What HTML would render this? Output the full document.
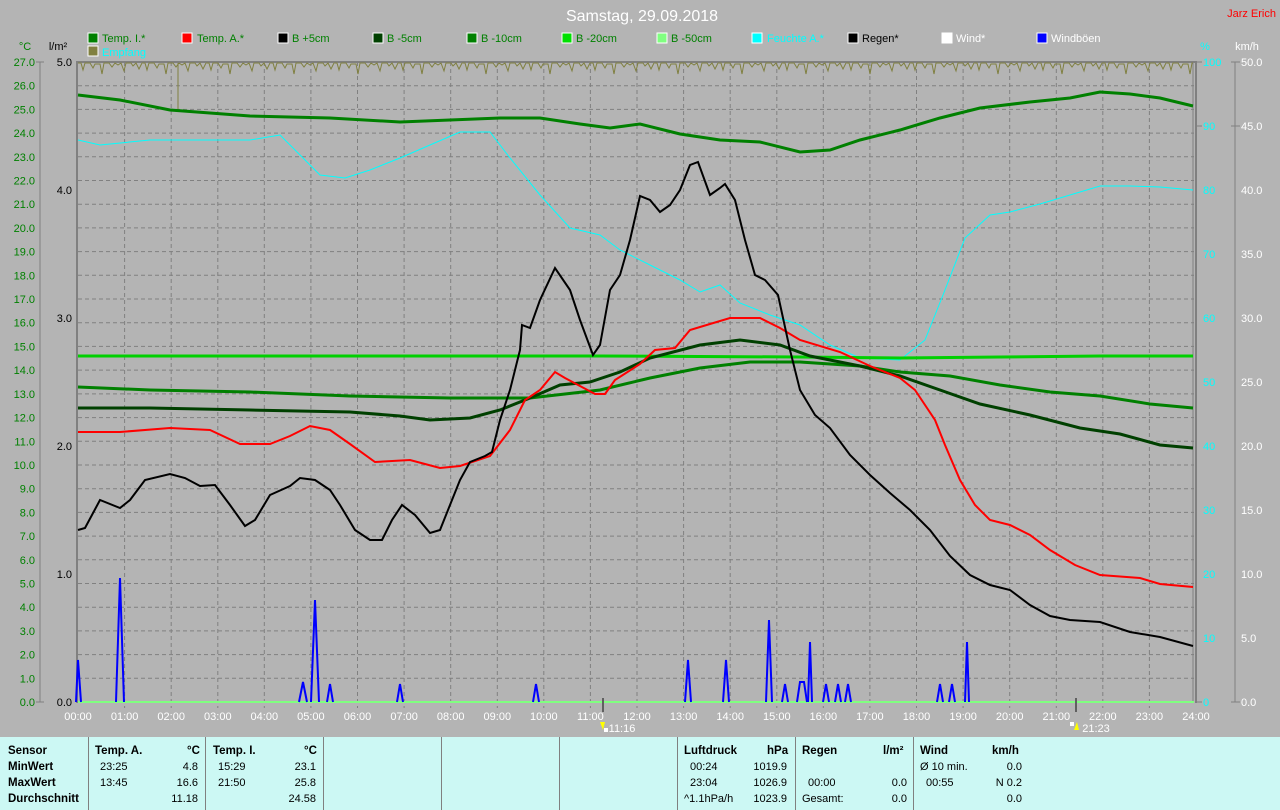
<!DOCTYPE html>
<html><head><meta charset="utf-8">
<style>
html,body{margin:0;padding:0;background:#b4b4b4;}
body{width:1280px;height:810px;overflow:hidden;position:relative;font-family:"Liberation Sans",sans-serif;}
svg{position:absolute;left:0;top:0;}
.tbl{position:absolute;left:0;top:737px;width:1280px;height:73px;background:#ccf8f4;}
.tbl .v{position:absolute;top:0;width:1px;height:73px;background:#808080;}
.tbl span{position:absolute;font-size:11px;color:#000;white-space:nowrap;}
.tbl b{position:absolute;font-size:11.5px;color:#000;white-space:nowrap;}
</style></head><body>
<svg width="1280" height="737" viewBox="0 0 1280 737" font-family="Liberation Sans, sans-serif">
<defs>
<pattern id="emp" x="78" y="62" width="64" height="18" patternUnits="userSpaceOnUse">
<polyline fill="none" stroke="#808040" stroke-width="1" points="0,1 3,1 5,8 7,1 12,1 15,6 17,2 22,2 24,12 26,1 31,1 34,5 37,1 40,3 43,1 46,9 48,1 53,1 55,4 58,1 61,7 64,1"/>
</pattern>
</defs>
<text x="642" y="21" fill="#fff" font-size="16" text-anchor="middle">Samstag, 29.09.2018</text>
<text x="1276" y="17" fill="#f00" font-size="11" text-anchor="end">Jarz Erich</text>
<!-- legend -->
<g font-size="11">
<rect x="88" y="33" width="10" height="10" fill="#008000" stroke="#fff"/><text x="102" y="42" fill="#008000">Temp. I.*</text>
<rect x="182" y="33" width="10" height="10" fill="#f00" stroke="#fff"/><text x="197" y="42" fill="#008000">Temp. A.*</text>
<rect x="278" y="33" width="10" height="10" fill="#000" stroke="#fff"/><text x="292" y="42" fill="#008000">B +5cm</text>
<rect x="373" y="33" width="10" height="10" fill="#004000" stroke="#fff"/><text x="387" y="42" fill="#008000">B -5cm</text>
<rect x="467" y="33" width="10" height="10" fill="#008000" stroke="#fff"/><text x="481" y="42" fill="#008000">B -10cm</text>
<rect x="562" y="33" width="10" height="10" fill="#00e000" stroke="#fff"/><text x="576" y="42" fill="#008000">B -20cm</text>
<rect x="657" y="33" width="10" height="10" fill="#80ff80" stroke="#fff"/><text x="671" y="42" fill="#008000">B -50cm</text>
<rect x="752" y="33" width="10" height="10" fill="#0ff" stroke="#fff"/><text x="767" y="42" fill="#0ff">Feuchte A.*</text>
<rect x="848" y="33" width="10" height="10" fill="#000" stroke="#fff"/><text x="862" y="42" fill="#000">Regen*</text>
<rect x="942" y="33" width="10" height="10" fill="#fff" stroke="#fff"/><text x="956" y="42" fill="#fff">Wind*</text>
<rect x="1037" y="33" width="10" height="10" fill="#00f" stroke="#fff"/><text x="1051" y="42" fill="#fff">Windböen</text>
<rect x="88" y="46" width="10" height="10" fill="#808040" stroke="#fff"/><text x="102" y="56" fill="#0ff">Empfang</text>
</g>
<text x="25" y="50" fill="#008000" font-size="11" text-anchor="middle">°C</text>
<text x="58" y="50" fill="#000" font-size="11" text-anchor="middle">l/m²</text>
<text x="1205" y="50" fill="#0ff" font-size="11" text-anchor="middle">%</text>
<text x="1247" y="50" fill="#fff" font-size="11" text-anchor="middle">km/h</text>
<!-- grid -->
<g stroke="#808080" stroke-width="1" stroke-dasharray="4,3">
<line x1="78" x2="1194" y1="85.7" y2="85.7"/><line x1="78" x2="1194" y1="109.4" y2="109.4"/><line x1="78" x2="1194" y1="133.1" y2="133.1"/><line x1="78" x2="1194" y1="156.8" y2="156.8"/><line x1="78" x2="1194" y1="180.5" y2="180.5"/><line x1="78" x2="1194" y1="204.2" y2="204.2"/><line x1="78" x2="1194" y1="227.9" y2="227.9"/><line x1="78" x2="1194" y1="251.6" y2="251.6"/><line x1="78" x2="1194" y1="275.3" y2="275.3"/><line x1="78" x2="1194" y1="299" y2="299"/><line x1="78" x2="1194" y1="322.7" y2="322.7"/><line x1="78" x2="1194" y1="346.4" y2="346.4"/><line x1="78" x2="1194" y1="370.1" y2="370.1"/><line x1="78" x2="1194" y1="393.9" y2="393.9"/><line x1="78" x2="1194" y1="417.6" y2="417.6"/><line x1="78" x2="1194" y1="441.3" y2="441.3"/><line x1="78" x2="1194" y1="465" y2="465"/><line x1="78" x2="1194" y1="488.7" y2="488.7"/><line x1="78" x2="1194" y1="512.4" y2="512.4"/><line x1="78" x2="1194" y1="536.1" y2="536.1"/><line x1="78" x2="1194" y1="559.8" y2="559.8"/><line x1="78" x2="1194" y1="583.5" y2="583.5"/><line x1="78" x2="1194" y1="607.2" y2="607.2"/><line x1="78" x2="1194" y1="630.9" y2="630.9"/><line x1="78" x2="1194" y1="654.6" y2="654.6"/><line x1="78" x2="1194" y1="678.3" y2="678.3"/>
<line y1="62" y2="708" x1="124.6" x2="124.6"/><line y1="62" y2="708" x1="171.2" x2="171.2"/><line y1="62" y2="708" x1="217.8" x2="217.8"/><line y1="62" y2="708" x1="264.3" x2="264.3"/><line y1="62" y2="708" x1="310.9" x2="310.9"/><line y1="62" y2="708" x1="357.5" x2="357.5"/><line y1="62" y2="708" x1="404.1" x2="404.1"/><line y1="62" y2="708" x1="450.7" x2="450.7"/><line y1="62" y2="708" x1="497.3" x2="497.3"/><line y1="62" y2="708" x1="543.8" x2="543.8"/><line y1="62" y2="708" x1="590.4" x2="590.4"/><line y1="62" y2="708" x1="637" x2="637"/><line y1="62" y2="708" x1="683.6" x2="683.6"/><line y1="62" y2="708" x1="730.2" x2="730.2"/><line y1="62" y2="708" x1="776.8" x2="776.8"/><line y1="62" y2="708" x1="823.3" x2="823.3"/><line y1="62" y2="708" x1="869.9" x2="869.9"/><line y1="62" y2="708" x1="916.5" x2="916.5"/><line y1="62" y2="708" x1="963.1" x2="963.1"/><line y1="62" y2="708" x1="1009.7" x2="1009.7"/><line y1="62" y2="708" x1="1056.3" x2="1056.3"/><line y1="62" y2="708" x1="1102.8" x2="1102.8"/><line y1="62" y2="708" x1="1149.4" x2="1149.4"/>
</g>
<!-- borders -->
<line x1="77" y1="62" x2="1197" y2="62" stroke="#808080" stroke-width="2"/>
<line x1="77" y1="61" x2="77" y2="703" stroke="#808080" stroke-width="2"/>
<line x1="1196" y1="61" x2="1196" y2="703" stroke="#808080" stroke-width="2"/>
<line x1="1193" y1="62" x2="1193" y2="702" stroke="#808080" stroke-width="1"/>
<line x1="78" y1="702" x2="1194" y2="702" stroke="#80ff80" stroke-width="2"/>
<line x1="603" y1="698" x2="603" y2="712" stroke="#606060" stroke-width="2"/>
<line x1="1076" y1="698" x2="1076" y2="712" stroke="#606060" stroke-width="2"/>
<!-- left axis -->
<line x1="40" y1="62" x2="40" y2="702" stroke="#808080"/>
<g stroke="#808080"><line x1="36" x2="44" y1="62" y2="62"/><line x1="36" x2="44" y1="702" y2="702"/></g>
<g fill="#008000" font-size="11" text-anchor="end">
<text x="35" y="66">27.0</text><text x="35" y="89.7">26.0</text><text x="35" y="113.4">25.0</text><text x="35" y="137.1">24.0</text><text x="35" y="160.8">23.0</text><text x="35" y="184.5">22.0</text><text x="35" y="208.2">21.0</text><text x="35" y="231.9">20.0</text><text x="35" y="255.6">19.0</text><text x="35" y="279.3">18.0</text><text x="35" y="303">17.0</text><text x="35" y="326.7">16.0</text><text x="35" y="350.4">15.0</text><text x="35" y="374.1">14.0</text><text x="35" y="397.9">13.0</text><text x="35" y="421.6">12.0</text><text x="35" y="445.3">11.0</text><text x="35" y="469">10.0</text><text x="35" y="492.7">9.0</text><text x="35" y="516.4">8.0</text><text x="35" y="540.1">7.0</text><text x="35" y="563.8">6.0</text><text x="35" y="587.5">5.0</text><text x="35" y="611.2">4.0</text><text x="35" y="634.9">3.0</text><text x="35" y="658.6">2.0</text><text x="35" y="682.3">1.0</text><text x="35" y="706">0.0</text>
</g>
<g fill="#000" font-size="11" text-anchor="end">
<text x="72" y="66">5.0</text><text x="72" y="194">4.0</text><text x="72" y="322">3.0</text><text x="72" y="450">2.0</text><text x="72" y="578">1.0</text><text x="72" y="706">0.0</text>
</g>
<!-- right axis -->
<line x1="1235" y1="62" x2="1235" y2="702" stroke="#808080"/>
<g fill="#0ff" font-size="11"><text x="1203" y="66">100</text><text x="1203" y="130">90</text><text x="1203" y="194">80</text><text x="1203" y="258">70</text><text x="1203" y="322">60</text><text x="1203" y="386">50</text><text x="1203" y="450">40</text><text x="1203" y="514">30</text><text x="1203" y="578">20</text><text x="1203" y="642">10</text><text x="1203" y="706">0</text></g>
<g fill="#fff" font-size="11"><text x="1241" y="66">50.0</text><text x="1241" y="130">45.0</text><text x="1241" y="194">40.0</text><text x="1241" y="258">35.0</text><text x="1241" y="322">30.0</text><text x="1241" y="386">25.0</text><text x="1241" y="450">20.0</text><text x="1241" y="514">15.0</text><text x="1241" y="578">10.0</text><text x="1241" y="642">5.0</text><text x="1241" y="706">0.0</text></g>
<g stroke="#808080"><line x1="1196" x2="1202" y1="62" y2="62"/><line x1="1196" x2="1202" y1="126" y2="126"/><line x1="1196" x2="1202" y1="702" y2="702"/><line x1="1231" x2="1240" y1="62" y2="62"/><line x1="1231" x2="1240" y1="126" y2="126"/><line x1="1231" x2="1240" y1="702" y2="702"/></g>
<!-- hour labels -->
<g fill="#fff" font-size="11" text-anchor="middle">
<text x="78" y="720">00:00</text><text x="124.6" y="720">01:00</text><text x="171.2" y="720">02:00</text><text x="217.8" y="720">03:00</text><text x="264.3" y="720">04:00</text><text x="310.9" y="720">05:00</text><text x="357.5" y="720">06:00</text><text x="404.1" y="720">07:00</text><text x="450.7" y="720">08:00</text><text x="497.3" y="720">09:00</text><text x="543.8" y="720">10:00</text><text x="590.4" y="720">11:00</text><text x="637" y="720">12:00</text><text x="683.6" y="720">13:00</text><text x="730.2" y="720">14:00</text><text x="776.8" y="720">15:00</text><text x="823.3" y="720">16:00</text><text x="869.9" y="720">17:00</text><text x="916.5" y="720">18:00</text><text x="963.1" y="720">19:00</text><text x="1009.7" y="720">20:00</text><text x="1056.3" y="720">21:00</text><text x="1102.8" y="720">22:00</text><text x="1149.4" y="720">23:00</text><text x="1196" y="720">24:00</text>
<text x="622" y="732">11:16</text><text x="1096" y="732">21:23</text>
</g>
<polygon points="600,722 605,722 603,730" fill="#ff0"/><rect x="604" y="728" width="4" height="4" fill="#fff"/>
<polygon points="1074,730 1079,730 1077,722" fill="#ff0"/><rect x="1070" y="722" width="4" height="4" fill="#fff"/>
<!-- empfang -->
<rect x="78" y="62" width="1115" height="18" fill="url(#emp)"/>
<line x1="178" y1="63" x2="178" y2="110" stroke="#808040"/>
<!-- curves -->
<polyline fill="none" stroke="#0ff" stroke-width="1" points="78,140 100,145 150,140 200,140 250,140 280,135 300,155 320,175 345,178 370,170 400,158 430,145 460,132 490,132 510,158 540,195 570,228 600,235 620,250 650,265 680,280 700,292 720,285 740,303 770,315 800,325 830,345 860,358 900,360 925,340 945,290 965,238 990,215 1010,212 1040,204 1070,195 1100,186 1130,186 1160,187 1193,190"/>
<polyline fill="none" stroke="#008000" stroke-width="3" points="78,95 120,100 170,110 250,116 330,118 400,122 450,120 500,118 540,118 580,124 610,128 640,124 680,134 720,140 760,142 800,152 830,150 860,140 900,130 940,118 980,108 1030,102 1070,98 1100,92 1130,94 1160,98 1193,106"/>
<polyline fill="none" stroke="#00d000" stroke-width="3" points="78,356 600,356 800,357 900,358 1000,357 1100,356 1193,356"/>
<polyline fill="none" stroke="#008000" stroke-width="3" points="78,387 150,390 250,392 350,396 450,398 530,398 600,390 650,378 700,368 750,362 800,362 860,366 900,372 950,376 1000,385 1050,392 1100,396 1150,404 1193,408"/>
<polyline fill="none" stroke="#004000" stroke-width="3" points="78,408 150,408 250,410 350,412 400,416 430,420 470,418 500,410 530,398 560,385 590,382 620,372 650,358 700,345 740,340 780,345 810,356 860,366 900,376 940,390 980,404 1030,415 1080,428 1120,434 1160,445 1193,448"/>
<polyline fill="none" stroke="#f00" stroke-width="2" points="78,432 120,432 170,428 210,430 240,444 270,444 290,436 310,426 330,430 350,444 375,462 410,460 425,464 440,468 460,466 490,456 510,430 525,400 540,390 555,372 565,378 580,386 595,394 605,394 615,380 640,364 655,350 675,348 690,330 710,324 730,318 760,318 780,328 800,340 840,352 870,366 900,378 915,390 935,420 945,445 960,480 975,505 990,520 1010,525 1030,535 1050,550 1075,565 1100,575 1140,578 1160,584 1193,587"/>
<polyline fill="none" stroke="#000" stroke-width="2" points="78,530 85,528 100,500 120,508 130,500 145,480 170,474 185,478 200,486 215,485 230,505 245,526 255,520 270,495 290,486 300,478 315,480 330,490 340,505 355,530 370,540 382,540 392,520 402,505 415,515 430,533 440,530 450,505 460,480 470,462 485,456 492,452 500,420 510,390 520,350 522,325 530,328 540,300 555,268 570,290 580,320 593,355 600,345 610,290 620,275 630,240 640,196 650,200 660,212 670,205 680,190 690,165 698,162 710,195 720,188 725,184 735,200 745,240 755,275 765,280 778,295 790,350 800,390 815,415 830,428 850,455 870,475 890,493 910,510 930,530 950,556 970,575 990,585 1010,590 1030,605 1050,616 1070,620 1100,622 1130,632 1160,637 1193,646"/>
<!-- windboen -->
<g fill="none" stroke="#00f" stroke-width="2">
<polyline points="76,702 78,660 81,702"/><polyline points="116,702 120,578 124,702"/><polyline points="299,702 303,682 307,702"/><polyline points="311,702 315,600 319,702"/><polyline points="327,702 330,684 333,702"/><polyline points="397,702 400,684 403,702"/><polyline points="533,702 536,684 539,702"/><polyline points="685,702 688,660 691,702"/><polyline points="723,702 726,660 729,702"/><polyline points="766,702 769,620 772,702"/><polyline points="782,702 785,684 788,702"/><polyline points="797,702 800,682 804,682 807,702"/><polyline points="808,702 810,642 812,702"/><polyline points="823,702 826,684 829,702"/><polyline points="835,702 838,684 841,702"/><polyline points="845,702 848,684 851,702"/><polyline points="937,702 940,684 943,702"/><polyline points="949,702 952,684 955,702"/><polyline points="965,702 967,642 969,702"/>
</g>
</svg>
<div class="tbl">
<div class="v" style="left:88px"></div><div class="v" style="left:205px"></div><div class="v" style="left:323px"></div><div class="v" style="left:441px"></div><div class="v" style="left:559px"></div><div class="v" style="left:677px"></div><div class="v" style="left:795px"></div><div class="v" style="left:913px"></div>
<b style="left:8px;top:8px">Sensor</b><b style="left:8px;top:24px">MinWert</b><b style="left:8px;top:40px">MaxWert</b><b style="left:8px;top:56px">Durchschnitt</b>
<b style="left:95px;top:8px">Temp. A.</b><b style="left:187px;top:8px">°C</b>
<span style="left:100px;top:24px">23:25</span><span style="right:1082px;top:24px">4.8</span>
<span style="left:100px;top:40px">13:45</span><span style="right:1082px;top:40px">16.6</span>
<span style="right:1082px;top:56px">11.18</span>
<b style="left:213px;top:8px">Temp. I.</b><b style="left:304px;top:8px">°C</b>
<span style="left:218px;top:24px">15:29</span><span style="right:964px;top:24px">23.1</span>
<span style="left:218px;top:40px">21:50</span><span style="right:964px;top:40px">25.8</span>
<span style="right:964px;top:56px">24.58</span>
<b style="left:684px;top:8px">Luftdruck</b><b style="left:767px;top:8px">hPa</b>
<span style="left:690px;top:24px">00:24</span><span style="right:493px;top:24px">1019.9</span>
<span style="left:690px;top:40px">23:04</span><span style="right:493px;top:40px">1026.9</span>
<span style="left:684px;top:56px">^1.1hPa/h</span><span style="right:493px;top:56px">1023.9</span>
<b style="left:802px;top:8px">Regen</b><b style="left:883px;top:8px">l/m²</b>
<span style="left:808px;top:40px">00:00</span><span style="right:373px;top:40px">0.0</span>
<span style="left:802px;top:56px">Gesamt:</span><span style="right:373px;top:56px">0.0</span>
<b style="left:920px;top:8px">Wind</b><b style="left:992px;top:8px">km/h</b>
<span style="left:920px;top:24px">Ø 10 min.</span><span style="right:258px;top:24px">0.0</span>
<span style="left:926px;top:40px">00:55</span><span style="right:258px;top:40px">N 0.2</span>
<span style="right:258px;top:56px">0.0</span>
</div>
</body></html>
